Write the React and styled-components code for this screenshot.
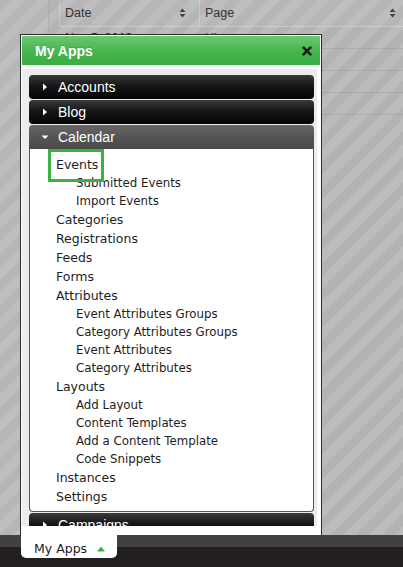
import styled, { createGlobalStyle } from "styled-components";

const GlobalStyle = createGlobalStyle`
    html, body {
        margin: 0;
        padding: 0;
        height: 100%;
        overflow: hidden;
    }

    body {
        background: repeating-linear-gradient(
            135deg,
            #b3b3b3 0 9px,
            #bcbcbc 9px 18px
        );
        font-family: "DejaVu Sans", sans-serif;
    }
`;

const Page = styled.div`
    position: relative;
    width: 403px;
    height: 567px;
    display: flex;
    flex-direction: column;
    overflow: hidden;
`;

const Workspace = styled.div`
    flex: 1;
    display: flex;
    min-height: 0;
`;

const Rail = styled.div`
    width: 48px;
    flex: none;
    border-right: 1px solid rgba(0, 0, 0, 0.06);
    background: rgba(255, 255, 255, 0.04);
`;

const Main = styled.div`
    flex: 1;
    padding-left: 10px;
`;

const Table = styled.div`
    width: 350px;
    font-family: "Liberation Sans", Arial, sans-serif;
    font-size: 12.5px;
    color: #333;
`;

const HeadRow = styled.div`
    display: grid;
    grid-template-columns: 140px 1fr;
    height: 27px;
`;

const HeadCell = styled.div`
    display: flex;
    align-items: center;
    justify-content: space-between;
    box-sizing: border-box;
    padding: 0 13px 0 5px;
    border-left: 1px solid rgba(255, 255, 255, 0.22);
    border-bottom: 1px solid rgba(255, 255, 255, 0.25);
    background: rgba(255, 255, 255, 0.04);
`;

const Row = styled.div`
    display: grid;
    grid-template-columns: 140px 1fr;
    height: 22px;
    box-sizing: border-box;
    border-bottom: 1px solid rgba(0, 0, 0, 0.07);
`;

const Cell = styled.div`
    display: flex;
    align-items: center;
    padding-left: 6px;
`;

const Popup = styled.section`
    position: absolute;
    left: 20px;
    top: 34px;
    width: 302px;
    height: 501px;
    box-sizing: border-box;
    border: 1px solid #2b2b2b;
    border-bottom: 0;
    padding: 1px 1px 0;
    background: #fff;
    display: flex;
    flex-direction: column;
    z-index: 1;
`;

const PopupHeader = styled.header`
    height: 29px;
    flex: none;
    display: flex;
    align-items: center;
    justify-content: space-between;
    padding: 0 8px 0 13px;
    background: linear-gradient(#6dc770, #45b54c 55%, #39ae42);
    color: #fff;
    font: bold 14px "Liberation Sans", Arial, sans-serif;
    text-shadow: 0 -1px 0 rgba(0, 0, 0, 0.12);
`;

const CloseButton = styled.button`
    all: unset;
    display: flex;
    cursor: pointer;
`;

const PopupBody = styled.div`
    flex: 1;
    min-height: 0;
    overflow: hidden;
    margin: 4px 3px 9px 0;
    padding: 6px 3px 0 7px;
    background: #ececec;
`;

const SectionBar = styled.div`
    height: 24px;
    box-sizing: border-box;
    display: flex;
    align-items: center;
    gap: 9px;
    padding-left: 12px;
    margin-bottom: ${({ open }) => (open ? "0" : "1px")};
    border-radius: ${({ open }) => (open ? "4px 4px 0 0" : "4px")};
    background: ${({ open }) =>
        open
            ? "linear-gradient(#676767, #555 50%, #4a4a4a)"
            : "linear-gradient(#3a3a3a, #161616 45%, #040404)"};
    color: #fff;
    font: 14px "Liberation Sans", Arial, sans-serif;
`;

const Arrow = styled.span`
    width: 8px;
    height: 8px;
    display: flex;
`;

const Panel = styled.ul`
    list-style: none;
    margin: 0 0 1px;
    padding: 6px 0 5px 26px;
    background: #fff;
    border: 1px solid #555;
    border-top: 0;
    border-radius: 0 0 4px 4px;
`;

const NavItem = styled.li`
    font-size: ${({ sub }) => (sub ? "11.8px" : "12.5px")};
    line-height: ${({ sub }) => (sub ? "18px" : "19px")};
    padding-left: ${({ sub }) => (sub ? "20px" : "0")};
    color: #1d1d1d;
    white-space: nowrap;
`;

const Highlight = styled.span`
    position: relative;

    &::after {
        content: "";
        position: absolute;
        left: -8px;
        right: -6px;
        top: -8px;
        bottom: -10px;
        border: 3px solid #3cb043;
    }
`;

const Dock = styled.footer`
    height: 32px;
    flex: none;
    display: flex;
    align-items: flex-start;
    padding-left: 21px;
    background: linear-gradient(#414141 0 12px, #231f20 12px);
`;

const DockTab = styled.button`
    all: unset;
    height: 23px;
    box-sizing: border-box;
    display: flex;
    align-items: center;
    gap: 10px;
    padding: 4px 12px 0 13px;
    background: #fff;
    border-radius: 0 0 5px 5px;
    font: 12.5px "DejaVu Sans", sans-serif;
    color: #222;
`;

const SortIcon = () => (
    <svg width="7" height="10" viewBox="0 0 7 10">
        <polygon points="0.5,4 3.5,0.5 6.5,4" fill="#444" />
        <polygon points="0.5,6 6.5,6 3.5,9.5" fill="#444" />
    </svg>
);

const sections = [
    { name: "Accounts" },
    { name: "Blog" },
    {
        name: "Calendar",
        open: true,
        items: [
            { label: "Events", active: true },
            { label: "Submitted Events", sub: true },
            { label: "Import Events", sub: true },
            { label: "Categories" },
            { label: "Registrations" },
            { label: "Feeds" },
            { label: "Forms" },
            { label: "Attributes" },
            { label: "Event Attributes Groups", sub: true },
            { label: "Category Attributes Groups", sub: true },
            { label: "Event Attributes", sub: true },
            { label: "Category Attributes", sub: true },
            { label: "Layouts" },
            { label: "Add Layout", sub: true },
            { label: "Content Templates", sub: true },
            { label: "Add a Content Template", sub: true },
            { label: "Code Snippets", sub: true },
            { label: "Instances" },
            { label: "Settings" },
        ],
    },
    { name: "Campaigns" },
];

// only the first row peeks out above the popup
const rows = [
    { id: 1, date: "Nov 5, 2013", page: "Hi" },
    { id: 2 },
    { id: 3 },
    { id: 4 },
];

function App() {
    return (
        <Page>
            <GlobalStyle />
            <Workspace>
                <Rail />
                <Main>
                    <Table>
                        <HeadRow>
                            <HeadCell>
                                Date
                                <SortIcon />
                            </HeadCell>
                            <HeadCell>
                                Page
                                <SortIcon />
                            </HeadCell>
                        </HeadRow>
                        {rows.map((row) => (
                            <Row key={row.id}>
                                <Cell>{row.date}</Cell>
                                <Cell>{row.page}</Cell>
                            </Row>
                        ))}
                    </Table>
                </Main>
            </Workspace>

            <Popup>
                <PopupHeader>
                    My Apps
                    <CloseButton>
                        <svg width="10" height="10" viewBox="0 0 10 10">
                            <path
                                d="M1.6 1.6 L8.4 8.4 M8.4 1.6 L1.6 8.4"
                                stroke="#1e1e1e"
                                strokeWidth="2.7"
                                strokeLinecap="round"
                            />
                        </svg>
                    </CloseButton>
                </PopupHeader>
                <PopupBody>
                    {sections.map((section) => (
                        <div key={section.name}>
                            <SectionBar open={section.open}>
                                <Arrow>
                                    <svg width="8" height="8" viewBox="0 0 8 8">
                                        {section.open ? (
                                            <polygon
                                                points="0.5,2.5 7.5,2.5 4,6"
                                                fill="#fff"
                                            />
                                        ) : (
                                            <polygon
                                                points="2,0.5 6,4 2,7.5"
                                                fill="#fff"
                                            />
                                        )}
                                    </svg>
                                </Arrow>
                                {section.name}
                            </SectionBar>
                            {section.open && (
                                <Panel>
                                    {section.items.map((item) => (
                                        <NavItem key={item.label} sub={item.sub}>
                                            {item.active ? (
                                                <Highlight>{item.label}</Highlight>
                                            ) : (
                                                item.label
                                            )}
                                        </NavItem>
                                    ))}
                                </Panel>
                            )}
                        </div>
                    ))}
                </PopupBody>
            </Popup>

            <Dock>
                <DockTab>
                    My Apps
                    <svg width="8" height="6" viewBox="0 0 8 6">
                        <polygon points="0,5.5 4,0.5 8,5.5" fill="#3cb043" />
                    </svg>
                </DockTab>
            </Dock>
        </Page>
    );
}

export default App;
